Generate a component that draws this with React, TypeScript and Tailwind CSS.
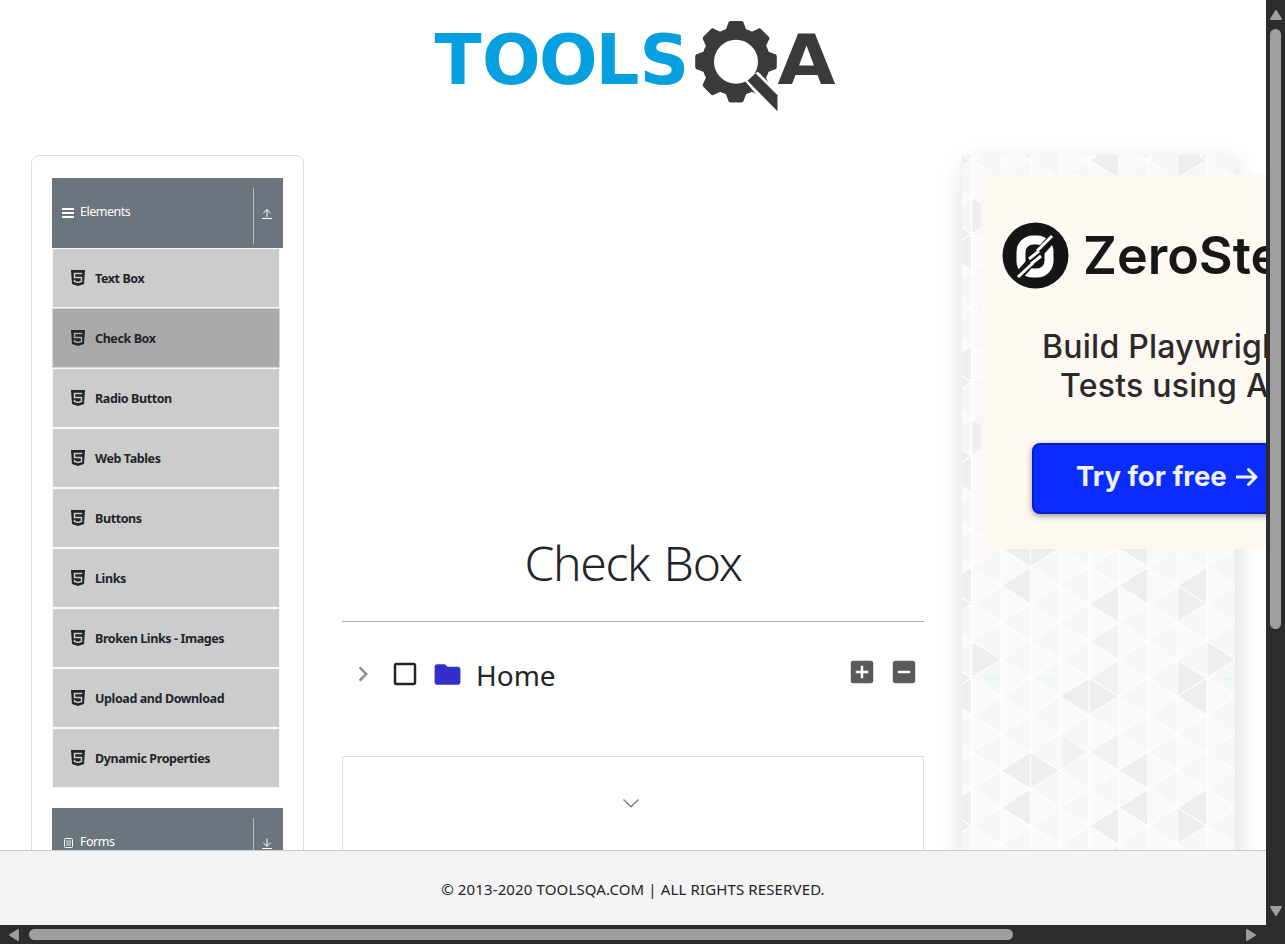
import React from "react";
import {
  MdAddBox,
  MdCheckBoxOutlineBlank,
  MdChevronRight,
  MdFolder,
  MdIndeterminateCheckBox,
} from "react-icons/md";

const ITEMS = [
  "Text Box",
  "Check Box",
  "Radio Button",
  "Web Tables",
  "Buttons",
  "Links",
  "Broken Links - Images",
  "Upload and Download",
  "Dynamic Properties",
];

const TEETH = [0, 45, 90, 135, 180, 225, 270, 315];

function Logo() {
  return (
    <svg className="block h-[110px] w-[420px]" viewBox="0 0 420 110">
      <text
        x="9.500 57 114 170.500 214.500"
        y="74"
        fontSize="69"
        fontWeight="700"
        fill="#06a0e0"
        className="font-['DejaVu_Sans']"
      >
        TOOLS
      </text>
      <g transform="translate(311 51.8)">
        <g fill="#3a3a3a">
          {TEETH.map((a) => (
            <path
              key={a}
              transform={`rotate(${a})`}
              d="M-11 -30 L-8 -38 Q-7.6 -40.8 -5.5 -40.8 H5.5 Q7.6 -40.8 8 -38 L11 -30 Z"
            />
          ))}
        </g>
        <circle r="28" fill="none" stroke="#3a3a3a" strokeWidth="12" />
        <path d="M14 14 L22 10 L38 26 L38 54 L8 18 Z" fill="#fff" />
        <path d="M19.5 11.5 L41.5 33.5 V49.5 L11.5 19 Z" fill="#3a3a3a" />
      </g>
      <text
        x="352.500"
        y="74"
        fontSize="69"
        fontWeight="700"
        fill="#3a3a3a"
        textLength="58"
        lengthAdjust="spacingAndGlyphs"
        className="font-['DejaVu_Sans']"
      >
        A
      </text>
    </svg>
  );
}

function Html5Icon({ active }: { active: boolean }) {
  return (
    <svg className="ml-[3px] h-[16px] w-[14px] shrink-0" viewBox="0 0 14 16">
      <path d="M0 0H14L13 14L7 16L1 14Z" fill="#212529" />
      <path
        d="M11.200 3.500H3.500V7.500H10.500V11.500L7 12.500L3.500 11.500V9.800"
        fill="none"
        stroke={active ? "#a9a9a9" : "#ccc"}
        strokeWidth="1.500"
      />
    </svg>
  );
}

function ArrowToLine({ down = false }: { down?: boolean }) {
  return (
    <svg className="h-[12px] w-[10px]" viewBox="0 0 10 12" fill="none" stroke="#fff">
      <path d={down ? "M5 .5V8M1.300 4.800L5 8.300L8.700 4.800" : "M5 9V1.800M1.300 5L5 1.500L8.700 5"} />
      <path d="M0 10.500H10" />
    </svg>
  );
}

function GroupHeader({
  label,
  icon,
  down,
}: {
  label: string;
  icon: React.ReactNode;
  down?: boolean;
}) {
  return (
    <div className="flex h-[70px] w-[231px] shrink-0 bg-[#6c757d] py-[10px] text-white">
      <div className="flex h-[48px] w-[201px] items-center pl-[10px]">
        <span className="flex w-[18px] pt-[2px]">{icon}</span>
        <span className="text-[12.5px] leading-[20px] tracking-[-0.5px]">{label}</span>
      </div>
      <div className="flex h-[56px] w-[30px] items-center justify-center border-l border-[#b9bcbf] pr-[3px] pb-[4px]">
        <ArrowToLine down={down} />
      </div>
    </div>
  );
}

function Sidebar() {
  return (
    <aside className="flex h-[900px] w-[273px] shrink-0 flex-col rounded-[8px] border border-[#dfdfdf] pt-[22px] pl-[20px]">
      <GroupHeader
        label="Elements"
        icon={
          <svg className="h-[10px] w-[12px]" viewBox="0 0 12 10" fill="#fff">
            <path d="M0 0h12v2H0zM0 4h12v2H0zM0 8h12v2H0z" />
          </svg>
        }
      />
      <ul className="mb-5 w-[228px]">
        {ITEMS.map((item) => (
          <li
            key={item}
            className={
              item === "Check Box"
                ? "flex h-[60px] items-center gap-[10px] border border-[#d5d8db] bg-[#a9a9a9] pl-[15px]"
                : "flex h-[60px] items-center gap-[10px] border border-[#f8f8f8] bg-[#ccc] pl-[15px]"
            }
          >
            <Html5Icon active={item === "Check Box"} />
            <span className="pt-[2px] text-[12.500px] font-bold tracking-[-0.4px] text-[#212529]">{item}</span>
          </li>
        ))}
      </ul>
      <GroupHeader
        label="Forms"
        down
        icon={
          <svg className="ml-[2px] h-[10px] w-[9px]" viewBox="0 0 9 10" fill="none" stroke="#fff">
            <rect x=".5" y=".5" width="8" height="9" rx="1" />
            <path d="M2 3h5M2 5h5M2 7h5" strokeWidth=".8" />
          </svg>
        }
      />
    </aside>
  );
}

function Content() {
  return (
    <main className="flex w-[582px] shrink-0 flex-col text-[#212529]">
      <h1 className="mt-[372px] flex h-[72px] shrink-0 items-center justify-center text-[48px] font-light tracking-[-1.300px] [word-spacing:3px]">
        Check Box
      </h1>
      <div className="mt-[22px] h-px shrink-0 bg-[#aeaeae]" />
      <div className="mt-[28px] flex h-[48px] shrink-0 items-center">
        <MdChevronRight className="ml-[6px] size-[30px] text-[#8c8e90]" />
        <MdCheckBoxOutlineBlank className="ml-[12px] size-[30px] text-[#212529]" />
        <MdFolder className="ml-[12px] size-[31px] text-[#3130cb]" />
        <span className="ml-[13px] pt-[2px] text-[28px] leading-[40px]">Home</span>
        <div className="mr-[5px] mb-[4px] ml-auto flex gap-[12px] text-[#585b5e]">
          <MdAddBox className="size-[30px]" />
          <MdIndeterminateCheckBox className="size-[30px]" />
        </div>
      </div>
      <div className="mt-[58px] flex h-[300px] shrink-0 justify-center border border-[#dfdfdf] pt-[42px] pr-[4px]">
        <svg className="h-[9px] w-[16px]" viewBox="0 0 16 9" fill="none" stroke="#777" strokeWidth="1.200">
          <path d="M.5 .5L8 7.800L15.500 .5" />
        </svg>
      </div>
    </main>
  );
}

const COL = 29.375;
const ROW = 37;
const HALF = ROW / 2;

type Tri = { col: number; side: "L" | "R"; y: number };

const SHADED: Tri[] = [
  { col: 1, side: "L", y: 548.5 },
  { col: 2, side: "R", y: 548.5 },
  { col: 5, side: "L", y: 548.5 },
  { col: 1, side: "L", y: 585.5 },
  { col: 5, side: "L", y: 585.5 },
  { col: 7, side: "L", y: 585.5 },
  { col: 7, side: "R", y: 604 },
  { col: 4, side: "L", y: 604 },
  { col: 0, side: "R", y: 659.5 },
  { col: 7, side: "R", y: 678 },
  { col: 7, side: "L", y: 696.5 },
  { col: 3, side: "L", y: 696.5 },
  { col: 4, side: "R", y: 696.5 },
];

const SOFT: Tri[] = [
  { col: 3, side: "R", y: 530 },
  { col: 4, side: "L", y: 530 },
  { col: 4, side: "L", y: 641 },
  { col: 4, side: "L", y: 678 },
];

function triPoints({ col, side, y }: Tri, originY: number) {
  const x = 9.7 + col * COL;
  const apex = side === "L" ? x : x + COL;
  const base = side === "L" ? x + COL : x;
  const cy = y - originY;
  return `${apex},${cy} ${base},${cy - HALF} ${base},${cy + HALF}`;
}

function TrianglePattern() {
  const tints: string[] = [];
  const edges: string[] = [];
  for (let col = -1; col < 9; col++) {
    const x = 9.7 + col * COL;
    edges.push(`M${x} 0V700`);
    for (let r = -2; r < 21; r++) {
      const left = 5 + r * ROW + (col % 2 === 0 ? 0 : HALF);
      tints.push(triPoints({ col, side: "L", y: left }, 0));
      edges.push(`M${x} ${left}L${x + COL} ${left - HALF}M${x} ${left}L${x + COL} ${left + HALF}`);
    }
  }
  const repeat = (list: Tri[]) =>
    list.flatMap((t) =>
      [-444, -222, 0, 222].flatMap((dy) =>
        [-8, 0, 8].map((dc) => triPoints({ ...t, col: t.col + dc, y: t.y + dy }, 155))
      )
    );
  return (
    <svg className="absolute inset-0 h-[700px] w-[273px]" viewBox="0 0 273 700">
      <rect width="273" height="700" fill="#fafafa" />
      {tints.map((p, i) => (
        <polygon key={i} points={p} fill="#f7f7f7" />
      ))}
      {repeat(SOFT).map((p, i) => (
        <polygon key={i} points={p} fill="#f2f2f2" />
      ))}
      {repeat(SHADED).map((p, i) => (
        <polygon key={i} points={p} fill="#eeeeee" />
      ))}
      <path d={edges.join("")} stroke="#fefefe" strokeWidth="1.300" fill="none" />
      <g fill="#d9fafa" opacity=".7">
        <ellipse cx="30" cy="524" rx="8" ry="1.500" />
        <ellipse cx="85" cy="524" rx="12" ry="1.500" opacity=".6" />
        <ellipse cx="266" cy="524" rx="8" ry="1.500" />
      </g>
    </svg>
  );
}

function Advert() {
  return (
    <div className="relative mt-[19px] ml-[19px] flex h-[375px] w-[375px] flex-col bg-[#fdf8f2] font-['Inter']">
      <div className="mt-[47px] ml-[21px] flex h-[68px] items-center">
        <svg className="size-[67px]" viewBox="0 0 67 67">
          <circle cx="33.500" cy="33.500" r="33" fill="#151515" />
          <rect x="19" y="18" width="28" height="33" rx="12" fill="none" stroke="#fff" strokeWidth="9" />
          <path d="M14 57L53 13" stroke="#151515" strokeWidth="9" />
          <path d="M16 55L31 41M27 37L37 29M29 42L39 34M35 29L50 14" stroke="#fff" strokeWidth="3" />
        </svg>
        <span className="ml-[14px] pt-[2px] text-[52px] leading-[68px] font-semibold text-[#171717]">ZeroStep</span>
      </div>
      <div className="mt-[38px] flex flex-col text-[32px] leading-[39px] font-medium tracking-[0.25px] whitespace-nowrap text-[#2b2a29]">
        <span className="ml-[61px]">Build Playwright</span>
        <span className="ml-[79px]">Tests using AI</span>
      </div>
      <div className="mt-[38px] ml-[51px] flex h-[71px] w-[273px] items-center rounded-[8px] border-2 border-[#0a1cc8] bg-[#0a2cff] pb-[3px] pl-[42px] shadow-[0_2px_6px_rgba(0,0,0,0.4)]">
        <span className="text-[27.500px] font-bold whitespace-nowrap text-[#eef2ff]">Try for free</span>
        <svg className="ml-[9px] h-[18px] w-[22px]" viewBox="0 0 22 18" fill="none" stroke="#eef2ff" strokeWidth="3">
          <path d="M1 9H20M12.500 1.500L20 9L12.500 16.500" strokeLinecap="round" strokeLinejoin="round" />
        </svg>
      </div>
    </div>
  );
}

function Footer() {
  return (
    <footer className="flex h-[75px] shrink-0 items-center justify-center border-t border-[#c9c9c9] bg-[#f4f4f4] pt-[3px] text-[15px] tracking-[0.13px] whitespace-nowrap text-[#212529]">
      © 2013-2020 TOOLSQA.COM | ALL RIGHTS RESERVED.
    </footer>
  );
}

function Tip({ d }: { d: string }) {
  return (
    <svg className="size-[12px] shrink-0" viewBox="0 0 12 12" fill="#9f9f9f" stroke="#9f9f9f" strokeWidth="1.800" strokeLinejoin="round">
      <path d={d} />
    </svg>
  );
}

export default function App() {
  return (
    <div className="flex h-[944px] w-[1285px] flex-col overflow-hidden bg-[#2c2c2c] font-['Noto_Sans',sans-serif]">
      <div className="flex h-[925px]">
        <div className="flex w-[1266px] flex-col overflow-hidden bg-white">
          <header className="h-[155px] shrink-0 pt-[10px] pl-[425px]">
            <Logo />
          </header>
          <div className="flex h-[695px] shrink-0 gap-[38px] pl-[31px] [clip-path:inset(-30px_0_0_0)]">
            <Sidebar />
            <Content />
            <aside className="relative h-[900px] w-[273px] shrink-0 shadow-[2px_9px_24px_rgba(0,0,0,0.14)]">
              <TrianglePattern />
              <Advert />
            </aside>
          </div>
          <Footer />
        </div>
        <div className="flex w-[19px] flex-col items-center justify-between pt-[9px] pb-[8px]">
          <Tip d="M6 2L11 10H1Z" />
          <div className="mt-[8px] mb-auto h-[600px] w-[11px] rounded-full bg-[#9f9f9f]" />
          <Tip d="M6 10L11 2H1Z" />
        </div>
      </div>
      <div className="flex h-[19px] items-center pl-[8px]">
        <Tip d="M2 6L10 1V11Z" />
        <div className="ml-[9px] h-[11px] w-[984px] rounded-full bg-[#9f9f9f]" />
        <div className="ml-[232px] flex">
          <Tip d="M10 6L2 1V11Z" />
        </div>
      </div>
    </div>
  );
}
